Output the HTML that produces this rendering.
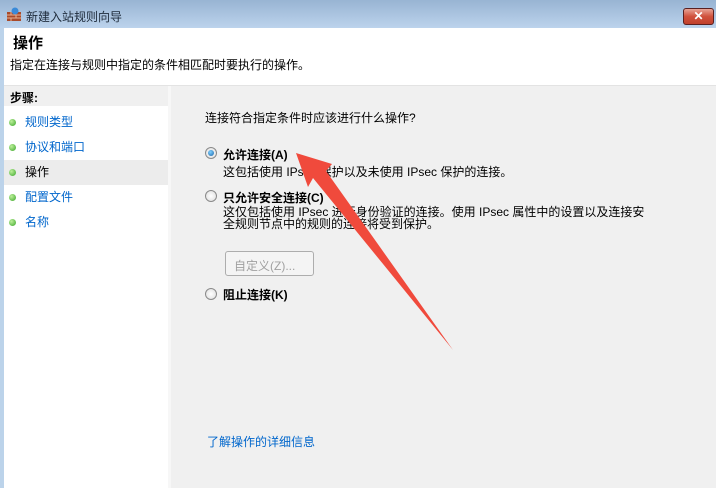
<!DOCTYPE html>
<html><head><meta charset="utf-8"><style>
*{margin:0;padding:0;box-sizing:border-box}
body{width:716px;height:488px;overflow:hidden;position:relative;background:#bcd3ea;font-family:"Liberation Sans","Noto Sans CJK SC","WenQuanYi Zen Hei",sans-serif;font-size:12px;color:#000}
.tb{position:absolute;left:0;top:0;width:716px;height:28px;background:linear-gradient(#98b4d3,#bcd3ec)}
.tt{position:absolute;left:26px;top:8px;font-size:12px;color:#1e2b3b}
.close{position:absolute;left:683px;top:8px;width:31px;height:17px;border:1px solid #5a2020;border-radius:3px;background:linear-gradient(#e8a496,#d0513c 50%,#c0402c);color:#fff;font-weight:bold;font-size:12px;text-align:center;line-height:15px}
.hdr{position:absolute;left:4px;top:28px;width:712px;height:58px;background:#fff;border-bottom:1px solid #e3e3e3}
.h1{position:absolute;left:9px;top:4px;font-size:15px;font-weight:bold}
.h2{position:absolute;left:6px;top:28px}
.left{position:absolute;left:4px;top:86px;width:164px;height:402px;background:#fff}
.lh{height:20px;background:#f0f0f0;font-weight:bold;padding:3px 6px;margin-bottom:4px}
.it{height:25px;line-height:25px;padding-left:21px;color:#0066cc;position:relative}
.it.sel{background:#ececec;color:#000}
.it:before{content:"";position:absolute;left:5px;top:9px;width:7px;height:7px;border-radius:50%;background:radial-gradient(circle at 35% 35%,#bdf09a,#3aa52a)}
.sep{position:absolute;left:168px;top:86px;width:3px;height:402px;background:#f7f7f7}
.right{position:absolute;left:171px;top:86px;width:545px;height:402px;background:#f0f0f0}
.t{position:absolute;white-space:nowrap}
.rb{position:absolute;width:12px;height:12px;border-radius:50%;border:1px solid #8a8a8a;background:radial-gradient(circle,#fff,#dcdcdc)}
.rb.on:after{content:"";position:absolute;left:2px;top:2px;width:6px;height:6px;border-radius:50%;background:radial-gradient(circle at 40% 35%,#7fd0ff,#1a64a8)}
.b{font-weight:bold}
.btn{position:absolute;left:54px;top:165px;width:89px;height:25px;border:1px solid #adadad;border-radius:3px;background:#f4f4f4;color:#a0a0a0;padding:5px 8px}
a{color:#0066cc}
</style></head><body>
<div class="tb"><svg style="position:absolute;left:6px;top:7px" width="16" height="15"><rect x="1" y="5" width="14" height="9" fill="#a84a2a"/><path d="M1 8h14M1 11h14M5 5v3M10 8v3M5 11v3" stroke="#e8b090" stroke-width="1"/><circle cx="9" cy="4" r="3.5" fill="#3a8ad8"/></svg><div class="tt">新建入站规则向导</div><div class="close">✕</div></div>
<div class="hdr"><div class="h1">操作</div><div class="h2">指定在连接与规则中指定的条件相匹配时要执行的操作。</div></div>
<div class="left"><div class="lh">步骤:</div>
<div class="it">规则类型</div><div class="it">协议和端口</div><div class="it sel">操作</div><div class="it">配置文件</div><div class="it">名称</div></div>
<div class="sep"></div>
<div class="right">
<div class="t" style="left:34px;top:23px">连接符合指定条件时应该进行什么操作?</div>
<div class="rb on" style="left:34px;top:61px"></div>
<div class="t b" style="left:52px;top:60px">允许连接(A)</div>
<div class="t" style="left:52px;top:77px">这包括使用 IPsec 保护以及未使用 IPsec 保护的连接。</div>
<div class="rb" style="left:34px;top:104px"></div>
<div class="t b" style="left:52px;top:103px">只允许安全连接(C)</div>
<div class="t" style="left:52px;top:120px;line-height:12px">这仅包括使用 IPsec 进行身份验证的连接。使用 IPsec 属性中的设置以及连接安<br>全规则节点中的规则的连接将受到保护。</div>
<div class="btn">自定义(Z)...</div>
<div class="rb" style="left:34px;top:202px"></div>
<div class="t b" style="left:52px;top:200px">阻止连接(K)</div>
<div class="t" style="left:36px;top:347px"><a>了解操作的详细信息</a></div>
</div>
<svg style="position:absolute;left:0;top:0" width="716" height="488"><polygon points="296,153 332,164 326,171 453,350 313,178 308,187" fill="#f04a3c"/></svg>
</body></html>
